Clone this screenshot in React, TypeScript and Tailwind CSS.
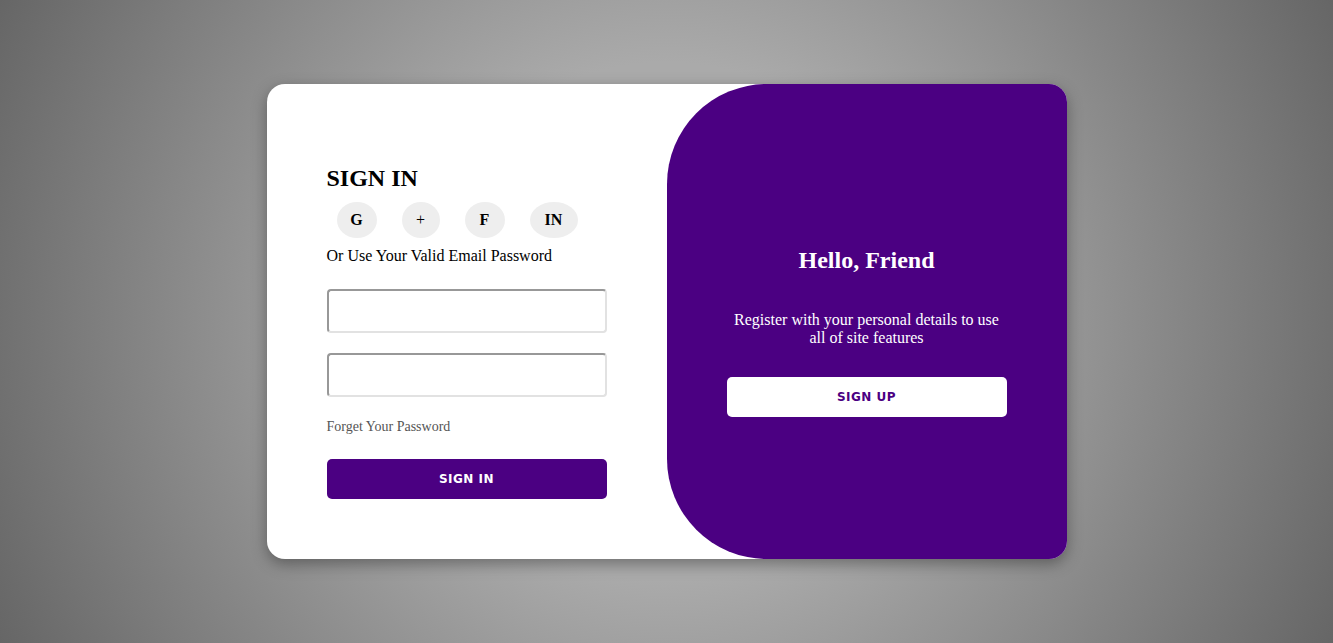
import React from "react";

const socials = [
  { label: "G", w: "w-[40px]", bold: true },
  { label: "+", w: "w-[38px]", bold: false },
  { label: "F", w: "w-[40px]", bold: true },
  { label: "IN", w: "w-[48px]", bold: true },
];

function SocialIcons() {
  return (
    <div className="flex flex-row gap-[25px] ml-[10px] mt-[10px]">
      {socials.map((s) => (
        <a
          key={s.label}
          href="#"
          className={`${s.w} h-[36px] rounded-[50%] bg-[#eeeeee] flex items-center justify-center text-[16px] text-black ${
            s.bold ? "font-bold" : "font-normal"
          }`}
        >
          {s.label}
        </a>
      ))}
    </div>
  );
}

function Field({ type }: { type: string }) {
  return (
    <input
      type={type}
      className="w-[280px] h-[44px] rounded-[4px] border-2 border-t-[#989898] border-l-[#989898] border-b-[#e2e2e2] border-r-[#e2e2e2] bg-white px-3 outline-none"
    />
  );
}

export default function App() {
  return (
    <div className="w-full h-[643px] flex items-center justify-center bg-[radial-gradient(circle,#aaaaaa_35%,#666666_100%)] font-['Liberation_Serif',serif]">
      <div className="w-[800px] h-[475px] bg-white rounded-[18px] overflow-hidden flex flex-row shadow-[0_5px_15px_rgba(0,0,0,0.35)]">
        {/* sign in form */}
        <form
          autoComplete="off"
          className="w-[400px] flex flex-col items-start px-[60px] pt-[80px]"
        >
          <h1 className="text-[24px] leading-[28px] font-bold text-black">SIGN IN</h1>
          <SocialIcons />
          <span className="mt-[8px] text-[16px] leading-[20px] text-black">
            Or Use Your Valid Email Password
          </span>
          <div className="mt-[23px]">
            <Field type="email" />
          </div>
          <div className="mt-[20px]">
            <Field type="password" />
          </div>
          <a href="#" className="mt-[21px] text-[14px] leading-[18px] text-[#555555]">
            Forget Your Password
          </a>
          <button
            type="button"
            className="mt-[23px] w-[280px] h-[40px] rounded-[5px] bg-[#4b0082] text-white text-[12px] font-bold tracking-[0.5px] uppercase font-['DejaVu_Sans',sans-serif]"
          >
            Sign In
          </button>
        </form>

        {/* toggle panel */}
        <div className="w-[400px] h-full bg-[#4b0082] rounded-l-[100px] flex flex-col items-center px-[60px] pt-[162px] text-white text-center">
          <h1 className="text-[24px] leading-[28px] font-bold">Hello, Friend</h1>
          <p className="mt-[37px] text-[16px] leading-[18.4px]">
            Register with your personal details to use all of site features
          </p>
          <button
            type="button"
            className="mt-[29px] w-[280px] h-[40px] rounded-[5px] bg-white text-[#4b0082] text-[12px] font-bold tracking-[0.5px] uppercase font-['DejaVu_Sans',sans-serif]"
          >
            Sign Up
          </button>
        </div>
      </div>
    </div>
  );
}
